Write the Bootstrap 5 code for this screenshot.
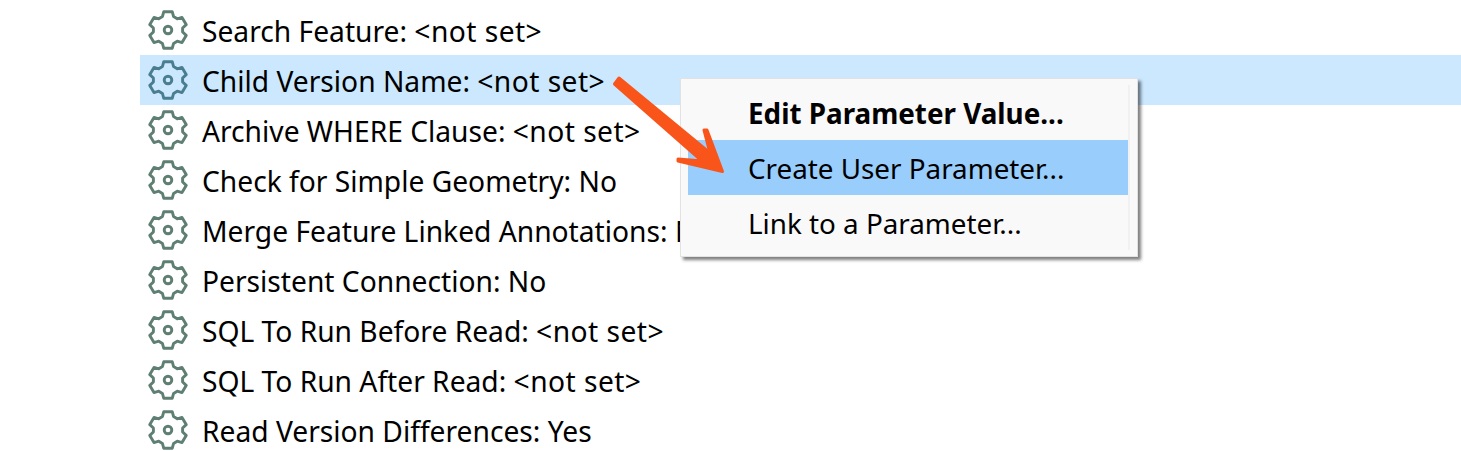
<!DOCTYPE html>
<html lang="en">
<head>
<meta charset="utf-8">
<title>Parameters</title>
<link href="https://cdn.jsdelivr.net/npm/bootstrap@5.3.0/dist/css/bootstrap.min.css" rel="stylesheet">
<style>
html, body { height: 451px; overflow: hidden; background: #fff; }
body { font-family: "Noto Sans", "Open Sans", sans-serif; color: #000; position: relative; }
.param-list { padding: 5px 0 0 140px; margin: 0; }
.param-row { height: 50px; padding: 0 0 0 8px; border: 0; background: transparent; color: #000; font-size: 28.2px; white-space: nowrap; gap: 14px; border-radius: 0 !important; }
.param-row > span { line-height: 50px; padding-top: 1px; }
.param-row.param-sel { background: #cbe8ff; }
.val-unset { letter-spacing: .45px; }
.gear-ic { width: 40px; height: 40px; flex: none; fill: none; stroke: #5f7f73; stroke-width: 2.9; stroke-linejoin: round; }
.param-sel .gear-ic { stroke: #4a7d8f; }
.ctx-menu { display: block; position: absolute; z-index: 5; left: 680px; top: 78px; width: 458px; height: 179px; margin: 0; padding: 6px 9px 6px 7px; background: #f9f9f9; border: 1px solid #e2e2e2; border-radius: 0; box-shadow: 3px 3px 3px rgba(0,0,0,.5); }
.ctx-menu::after { content: ""; position: absolute; top: 6px; bottom: 6px; right: 7px; width: 2px; background: #f1f1f1; }
.ctx-menu .dropdown-item { height: 55px; line-height: 57px; padding: 0 0 0 60px; font-size: 27.8px; color: #000; }
.ctx-menu .dropdown-item.active { background: #99cdfc; color: #000; }
.ctx-menu .dropdown-item.item-bold { font-weight: 700; }
.arrow-ov { position: absolute; z-index: 10; left: 0; top: 0; width: 1461px; height: 451px; pointer-events: none; fill: #f9551b; stroke: #f9551b; stroke-width: 3; stroke-linejoin: round; }
</style>
</head>
<body>
<svg width="0" height="0" class="d-block position-absolute">
<defs>
<symbol id="gear" viewBox="-20 -20 40 40">
<path d="M-5.6-13.4L-4.2-18.3 4.2-18.3 5.6-13.4 9.2-11.2 14-12.6 18.2-5.4 14.6-2 14.6 2 18.2 5.4 14 12.6 9.2 11.2 5.6 13.4 4.2 18.3-4.2 18.3-5.6 13.4-9.2 11.2-14 12.6-18.2 5.4-14.6 2-14.6-2-18.2-5.4-14-12.6-9.2-11.2Z"/>
<circle r="3.8"/>
</symbol>
</defs>
</svg>
<ul class="list-group param-list">
<li class="list-group-item d-flex align-items-center param-row"><svg class="gear-ic"><use href="#gear"/></svg><span>Search Feature: <span class="val-unset">&lt;not set&gt;</span></span></li>
<li class="list-group-item d-flex align-items-center param-row param-sel"><svg class="gear-ic"><use href="#gear"/></svg><span>Child Version Name: <span class="val-unset">&lt;not set&gt;</span></span></li>
<li class="list-group-item d-flex align-items-center param-row"><svg class="gear-ic"><use href="#gear"/></svg><span>Archive WHERE Clause: <span class="val-unset">&lt;not set&gt;</span></span></li>
<li class="list-group-item d-flex align-items-center param-row"><svg class="gear-ic"><use href="#gear"/></svg><span>Check for Simple Geometry: No</span></li>
<li class="list-group-item d-flex align-items-center param-row"><svg class="gear-ic"><use href="#gear"/></svg><span>Merge Feature Linked Annotations: No</span></li>
<li class="list-group-item d-flex align-items-center param-row"><svg class="gear-ic"><use href="#gear"/></svg><span>Persistent Connection: No</span></li>
<li class="list-group-item d-flex align-items-center param-row"><svg class="gear-ic"><use href="#gear"/></svg><span>SQL To Run Before Read: <span class="val-unset">&lt;not set&gt;</span></span></li>
<li class="list-group-item d-flex align-items-center param-row"><svg class="gear-ic"><use href="#gear"/></svg><span>SQL To Run After Read: <span class="val-unset">&lt;not set&gt;</span></span></li>
<li class="list-group-item d-flex align-items-center param-row"><svg class="gear-ic"><use href="#gear"/></svg><span>Read Version Differences: Yes</span></li>
</ul>
<div class="dropdown-menu ctx-menu">
<a class="dropdown-item item-bold" href="#">Edit Parameter Value...</a>
<a class="dropdown-item active" href="#">Create User Parameter...</a>
<a class="dropdown-item" href="#">Link to a Parameter...</a>
</div>
<svg class="arrow-ov" viewBox="0 0 1461 451">
<path d="M619 78L710 153 704 130 707 130 722.5 171.5 678 161 678 159 702 161 614.5 84Z"/>
</svg>
<script src="https://cdn.jsdelivr.net/npm/bootstrap@5.3.0/dist/js/bootstrap.bundle.min.js"></script>
</body>
</html>
